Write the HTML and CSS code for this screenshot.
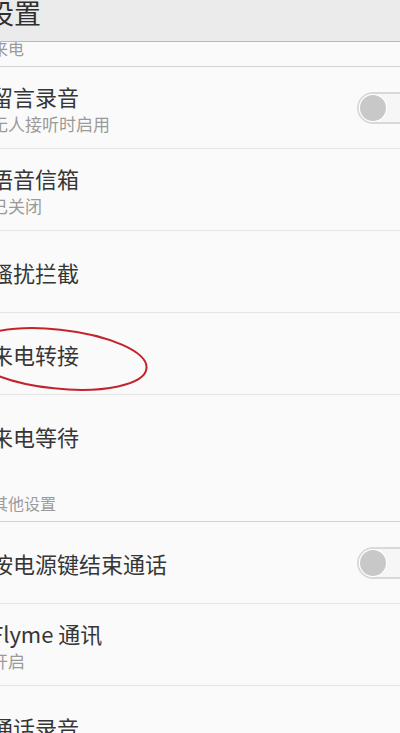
FILE: index.html
```html
<!DOCTYPE html>
<html lang="zh-CN">

<head>
    <meta charset="UTF-8">
    <meta name="viewport" content="width=device-width, initial-scale=1.0">
    <title>设置</title>
    <link rel="stylesheet" href="styles.css">
</head>

<body>
    <div class="header">
        <span class="header-title">设置</span>
    </div>

    <div class="group-title first"><span>来电</span></div>

    <div class="row two-line">
        <div class="row-text">
            <div class="row-title">留言录音</div>
            <div class="row-sub">无人接听时启用</div>
        </div>
        <div class="switch"><span class="knob"></span></div>
    </div>

    <div class="row two-line">
        <div class="row-text">
            <div class="row-title">语音信箱</div>
            <div class="row-sub">已关闭</div>
        </div>
    </div>

    <div class="row">
        <div class="row-text">
            <div class="row-title">骚扰拦截</div>
        </div>
    </div>

    <div class="row marked">
        <div class="row-text">
            <div class="row-title">来电转接</div>
        </div>
        <!-- red pen circle drawn over the screenshot -->
        <svg class="mark" width="200" height="82" viewBox="0 0 200 82">
            <ellipse cx="57" cy="46" rx="90" ry="29.5" transform="rotate(6 57 46)" fill="none" stroke="#c3242c" stroke-width="2" />
        </svg>
    </div>

    <div class="row last">
        <div class="row-text">
            <div class="row-title">来电等待</div>
        </div>
    </div>

    <div class="group-title"><span>其他设置</span></div>

    <div class="row">
        <div class="row-text">
            <div class="row-title">按电源键结束通话</div>
        </div>
        <div class="switch"><span class="knob"></span></div>
    </div>

    <div class="row two-line">
        <div class="row-text">
            <div class="row-title">Flyme 通讯</div>
            <div class="row-sub">开启</div>
        </div>
    </div>

    <div class="row">
        <div class="row-text">
            <div class="row-title">通话录音</div>
        </div>
    </div>
</body>

</html>
```

FILE: styles.css
```css
* {
    margin: 0;
    padding: 0;
    box-sizing: border-box;
}

html,
body {
    width: 400px;
    overflow: hidden;
}

body {
    background-color: #fafafa;
    font-family: "Noto Sans CJK SC", "Noto Sans", sans-serif;
    color: #333;
}

.header {
    height: 42px;
    background-color: #ebebeb;
    border-bottom: 1px solid #8fd0ad;
    display: flex;
    align-items: flex-end;
    padding-bottom: 15px;
    overflow: hidden;
}

.header-title {
    margin-left: -13px;
    font-size: 27px;
    line-height: 27px;
    color: #2f2f2f;
}

.group-title {
    height: 45px;
    display: flex;
    align-items: flex-end;
    padding-bottom: 10px;
    border-bottom: 1px solid #d2d2d2;
    overflow: hidden;
}

.group-title.first {
    height: 25px;
}

.group-title span {
    margin-left: -8px;
    font-size: 16px;
    line-height: 16px;
    color: #9b9b9b;
}

.row {
    position: relative;
    height: 82px;
    display: flex;
    align-items: center;
    justify-content: space-between;
    border-bottom: 1px solid #e5e5e5;
}

.row.last {
    border-bottom: none;
}

.row-text {
    margin-left: -9px;
    display: flex;
    flex-direction: column;
    gap: 4px;
}

.row-title {
    font-size: 22px;
    line-height: 28px;
    color: #363636;
}

.row-sub {
    font-size: 17px;
    line-height: 20px;
    color: #9a9a9a;
}

.switch {
    width: 62px;
    height: 32px;
    margin-right: -19px;
    border: 2px solid #d9d9d9;
    border-radius: 16px;
    background-color: #f6f6f6;
    display: flex;
    align-items: center;
    padding-left: 1px;
}

.knob {
    width: 26px;
    height: 26px;
    border-radius: 50%;
    background-color: #c8c8c8;
    box-shadow: 0 0 0 1px #fff;
}

.mark {
    position: absolute;
    left: 0;
    top: 0;
    pointer-events: none;
}
```
